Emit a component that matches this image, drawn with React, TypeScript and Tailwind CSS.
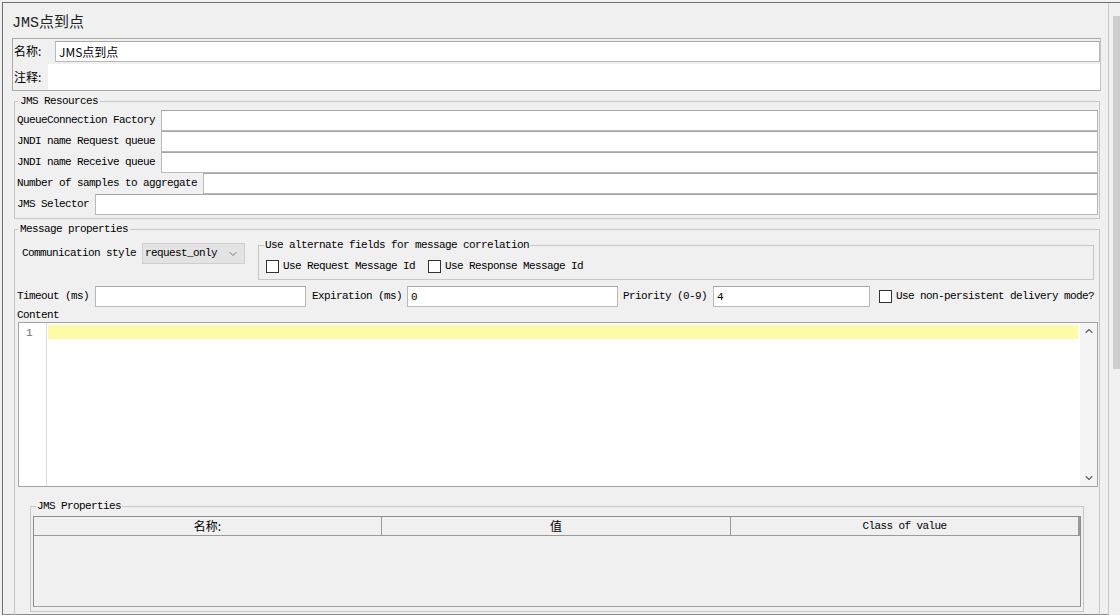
import { ChevronDown, ChevronUp } from "lucide-react";

const mono = "[font-family:'Liberation_Mono','Noto_Sans_CJK_SC',monospace] text-[11px] tracking-[-0.6px] text-black";
const cjk = "[font-family:'Noto_Sans_CJK_SC',sans-serif] tracking-normal text-[12px]";

function Field({ value = "", className = "" }: { value?: string; className?: string }) {
  return (
    <input
      readOnly
      value={value}
      className={`h-[21px] min-w-0 bg-white border border-[#b9b9b9] border-t-[#a5a5a5] px-[3px] outline-none ${className}`}
    />
  );
}

function Check({ label, className = "" }: { label: string; className?: string }) {
  return (
    <div className={`flex items-center ${className}`}>
      <div className="w-[13px] h-[13px] border border-[#333] bg-white shrink-0" />
      <span className="ml-[4px] whitespace-pre">{label}</span>
    </div>
  );
}

const resources: [string, string][] = [
  ["QueueConnection Factory", ""],
  ["JNDI name Request queue", ""],
  ["JNDI name Receive queue", ""],
  ["Number of samples to aggregate", ""],
  ["JMS Selector", ""],
];

export default function App() {
  return (
    <div className={`w-[1120px] h-[615px] overflow-hidden bg-[#f0f0f0] pt-[2px] pl-[2px] ${mono}`}>
      <div className="flex h-full border-l border-t border-[#6f6f6f]">
        {/* main panel */}
        <div className="flex-1 min-w-0 border-b border-[#8a8a8a]">
          {/* title */}
          <div className="h-[35px] pl-[9px] pt-[11px]">
            <span className="[font-family:'Liberation_Mono','Noto_Sans_CJK_SC',sans-serif] text-[15px] tracking-normal leading-[20px] text-[#222]">
              JMS点到点
            </span>
          </div>

          {/* name / comment */}
          <div className="ml-[9px] mr-[7px] h-[53px] border border-[#a9a9a9] border-r-[#c4c4c4]">
            <div className="flex items-center h-[23px] pt-[1px]">
              <span className={`w-[42px] pl-[1px] ${cjk}`}>名称:</span>
              <Field value="JMS点到点" className={`flex-1 ${cjk}`} />
            </div>
            <div className="flex items-center h-[28px] pt-[1px]">
              <span className={`w-[35px] pl-[1px] ${cjk}`}>注释:</span>
              <div className="flex-1 h-[26px] bg-white" />
            </div>
          </div>

          {/* JMS Resources */}
          <fieldset className="mt-[4px] ml-[11px] mr-[8px] border border-[#c6c6c6] pb-[3px]">
            <legend className="ml-[3px] px-[2px] leading-[12px]">JMS Resources</legend>
            <div className="mt-[3px] pr-[1px]">
              {resources.map(([label, value]) => (
                <div key={label} className="flex items-center h-[21px]">
                  <span className="pl-[2px] whitespace-pre">{label}</span>
                  <Field value={value} className="flex-1 ml-[6px]" />
                </div>
              ))}
            </div>
          </fieldset>

          {/* Message properties */}
          <fieldset className="mt-[4px] ml-[11px] mr-[8px] border border-[#c6c6c6] pb-[4px]">
            <legend className="ml-[3px] px-[2px] leading-[12px]">Message properties</legend>

            <div className="flex items-start mt-[4px]">
              <div className="flex items-center mt-[4px] pl-[7px]">
                <span className="whitespace-pre">Communication style</span>
                <div className="ml-[6px] w-[103px] h-[21px] bg-[#e3e3e3] border border-[#cfcfcf] flex items-center justify-between pl-[2px] pr-[5px]">
                  <span>request_only</span>
                  <ChevronDown size={12} strokeWidth={1.5} className="text-[#555]" />
                </div>
              </div>
              <fieldset className="ml-[13px] mr-[5px] flex-1 border border-[#c6c6c6] pb-[5px]">
                <legend className="ml-[5px] px-[1px] leading-[12px]">Use alternate fields for message correlation</legend>
                <div className="flex items-center h-[16px] mt-[7px] pl-[7px]">
                  <Check label="Use Request Message Id" />
                  <Check label="Use Response Message Id" className="ml-[13px]" />
                </div>
              </fieldset>
            </div>

            <div className="flex items-center mt-[5px] h-[23px] pl-[2px]">
              <span className="whitespace-pre">Timeout (ms)</span>
              <Field className="ml-[6px] w-[211px]" />
              <span className="ml-[6px] whitespace-pre">Expiration (ms)</span>
              <Field value="0" className="ml-[5px] w-[211px]" />
              <span className="ml-[5px] whitespace-pre">Priority (0-9)</span>
              <Field value="4" className="ml-[6px] w-[157px]" />
              <Check label="Use non-persistent delivery mode?" className="ml-[9px]" />
            </div>

            <div className="h-[14px] pl-[2px] leading-[15px]">Content</div>

            {/* editor */}
            <div className="ml-[3px] mr-[1px] h-[165px] border border-[#a3a3a3] bg-white flex">
              <div className="w-[28px] border-r border-[#dcdcdc] text-[#707070] text-right pr-[14px] pt-[3px] leading-[14px]">
                1
              </div>
              <div className="flex-1 pt-[2px] pl-[1px] pr-[2px]">
                <div className="h-[14px] bg-[#fdfba8]" />
              </div>
              <div className="w-[17px] bg-[#f4f4f4] flex flex-col justify-between items-center pt-[2px] pb-[2px]">
                <ChevronUp size={12} strokeWidth={2.2} className="text-[#606060]" />
                <ChevronDown size={12} strokeWidth={2.2} className="text-[#606060]" />
              </div>
            </div>

            {/* JMS Properties */}
            <fieldset className="mt-[13px] ml-[15px] mr-[15px] border border-[#c6c6c6] pb-[4px]">
              <legend className="ml-[5px] px-[1px] leading-[12px]">JMS Properties</legend>
              <div className="mt-[4px] ml-[2px] mr-[2px] border border-[#8c8c8c] border-b-[#a0a0a0]">
                <div className="flex h-[19px] border-b border-[#9a9a9a] bg-[#f0f0f0]">
                  <div className={`w-[348px] flex items-center justify-center border-r border-[#9a9a9a] ${cjk}`}>名称:</div>
                  <div className={`w-[349px] flex items-center justify-center border-r border-[#9a9a9a] ${cjk}`}>值</div>
                  <div className="flex-1 flex items-center justify-center border-r-2 border-[#9a9a9a]">Class of value</div>
                </div>
                <div className="h-[70px] bg-[#f0f0f0]" />
              </div>
            </fieldset>
          </fieldset>
        </div>

        {/* window scrollbar */}
        <div className="w-[12px] border-l border-[#c8c8c8] bg-[#f0f0f0] flex pl-[4px] pt-[13px]">
          <div className="w-full h-[353px] bg-[#cdcdcd]" />
        </div>
      </div>
    </div>
  );
}
